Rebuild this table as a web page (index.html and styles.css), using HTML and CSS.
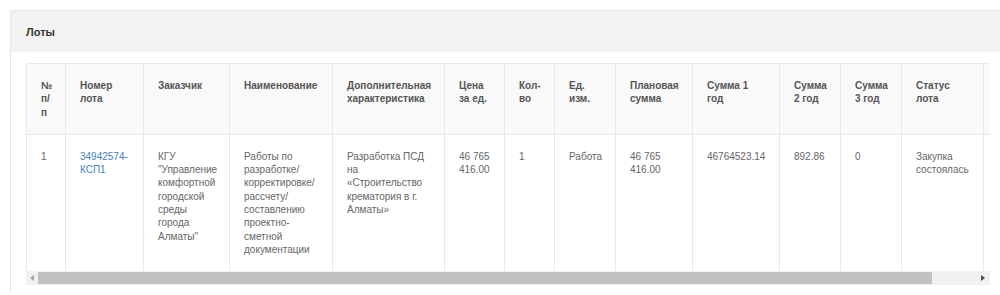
FILE: index.html
```html
<!DOCTYPE html>
<html lang="ru">
<head>
<meta charset="utf-8">
<title>Лоты</title>
<link rel="stylesheet" href="styles.css">
</head>
<body>
<div class="panel">
  <div class="panel-heading">Лоты</div>
  <div class="panel-body">
    <div class="table-wrap">
      <table class="lots">
        <colgroup>
          <col class="c1"><col class="c2"><col class="c3"><col class="c4"><col class="c5"><col class="c6"><col class="c7">
          <col class="c8"><col class="c9"><col class="c10"><col class="c11"><col class="c12"><col class="c13"><col class="c14">
        </colgroup>
        <thead>
          <tr>
            <th>№ п/ п</th>
            <th>Номер лота</th>
            <th>Заказчик</th>
            <th>Наименование</th>
            <th>Дополнительная характеристика</th>
            <th>Цена за ед.</th>
            <th>Кол-во</th>
            <th>Ед. изм.</th>
            <th>Плановая сумма</th>
            <th>Сумма 1 год</th>
            <th>Сумма 2 год</th>
            <th>Сумма 3 год</th>
            <th>Статус лота</th>
            <th></th>
          </tr>
        </thead>
        <tbody>
          <tr>
            <td>1</td>
            <td><a class="link" href="#">34942574-КСП1</a></td>
            <td>КГУ "Управление комфортной городской среды города Алматы"</td>
            <td>Работы по разработке/ корректировке/ рассчету/ составлению проектно-сметной документации</td>
            <td>Разработка ПСД на «Строительство крематория в г. Алматы»</td>
            <td>46 765 416.00</td>
            <td>1</td>
            <td>Работа</td>
            <td>46 765 416.00</td>
            <td>46764523.14</td>
            <td>892.86</td>
            <td>0</td>
            <td>Закупка состоялась</td>
            <td></td>
          </tr>
        </tbody>
      </table>
    </div>
    <div class="hscroll">
      <div class="hs-btn hs-left"><span class="tri tri-left"></span></div>
      <div class="hs-track"><div class="hs-thumb" style="width: 894px"></div></div>
      <div class="hs-btn hs-right"><span class="tri tri-right"></span></div>
    </div>
  </div>
</div>
</body>
</html>
```

FILE: styles.css
```css
html, body {
  background: #ffffff;
}
body {
  margin: 10px 0 0 10px;
  font-family: "Liberation Sans", Arial, sans-serif;
  color: #666666;
}
.panel {
  border: 1px solid #e7e7e7;
  border-right: 0;
  border-bottom: 0;
  min-height: 284px;
  box-sizing: border-box;
}
.panel-heading {
  background: #f2f2f2;
  height: 41px;
  padding: 0 15px;
  display: flex;
  align-items: center;
  font-size: 11px;
  font-weight: bold;
  color: #333333;
}
.panel-body {
  padding: 11px 10px 0 15px;
}
.table-wrap {
  overflow: hidden;
}
.lots {
  table-layout: fixed;
  border-collapse: collapse;
  width: 1007px;
  font-size: 10px;
  line-height: 13.3px;
}
.lots th, .lots td {
  border: 1px solid #e9e9e9;
  padding: 15px 14px;
  text-align: left;
  vertical-align: top;
}
.lots th {
  background: #f9f9f9;
  color: #555555;
  font-weight: bold;
}
.lots tbody td {
  border-bottom: 0;
}
.link {
  color: #3f7fc2;
  text-decoration: none;
}
.c1 { width: 39px; }
.c2 { width: 78px; }
.c3 { width: 86px; }
.c4 { width: 103px; }
.c5 { width: 112px; }
.c6 { width: 60px; }
.c7 { width: 50px; }
.c8 { width: 61px; }
.c9 { width: 77px; }
.c10 { width: 87px; }
.c11 { width: 61px; }
.c12 { width: 61px; }
.c13 { width: 82px; }
.c14 { width: 50px; }

.hscroll {
  display: flex;
  height: 14px;
  background: #f1f1f1;
}
.hs-btn {
  width: 12px;
  display: flex;
  align-items: center;
  justify-content: center;
}
.hs-right {
  width: 14px;
}
.hs-track {
  flex: 1;
  display: flex;
  padding: 1px 0;
}
.hs-thumb {
  background: #c1c1c1;
}
.tri {
  width: 0;
  height: 0;
  border-top: 3.5px solid transparent;
  border-bottom: 3.5px solid transparent;
}
.tri-left {
  border-right: 4px solid #a3a3a3;
}
.tri-right {
  border-left: 4px solid #505050;
}
```
